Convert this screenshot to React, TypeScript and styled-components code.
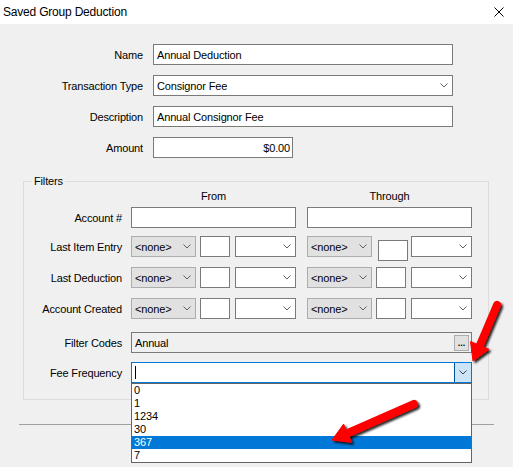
import React from "react";
import styled, { createGlobalStyle } from "styled-components";

const GlobalStyle = createGlobalStyle`
  html, body {
    margin: 0;
    padding: 0;
    background: #f0f0f0;
  }
  body {
    font-family: "Liberation Sans", Arial, sans-serif;
    font-size: 11px;
    color: #000;
  }
`;

const Window = styled.div`
  position: relative;
  width: 513px;
  height: 467px;
  overflow: hidden;
  background: #f0f0f0;
  display: flex;
  flex-direction: column;
`;

const TitleBar = styled.div`
  flex: none;
  height: 24px;
  box-sizing: border-box;
  padding: 0 9px 0 3px;
  background: #fff;
  display: flex;
  align-items: center;
  justify-content: space-between;
`;

const Title = styled.span`
  font-size: 12px;
  letter-spacing: -0.2px;
`;

const Body = styled.div`
  display: flex;
  flex-direction: column;
  padding-top: 20px;
`;

const TopForm = styled.div`
  display: grid;
  grid-template-columns: 143px 300px;
  grid-auto-rows: 21px;
  column-gap: 10px;
  row-gap: 10px;
  align-items: center;
`;

const Label = styled.span`
  text-align: right;
  letter-spacing: -0.15px;
  white-space: nowrap;
`;

const Box = styled.div<{ $w?: number }>`
  box-sizing: border-box;
  flex: none;
  height: 21px;
  width: ${({ $w }) => ($w ? `${$w}px` : "100%")};
  border: 1px solid #7a7a7a;
  background: #fff;
  display: flex;
  align-items: center;
  padding: 0 4px 0 3px;
  white-space: nowrap;
  overflow: hidden;
  letter-spacing: -0.15px;
`;

const AmountBox = styled(Box)`
  justify-content: flex-end;
  padding-right: 2px;
`;

const ComboText = styled.span`
  flex: 1;
`;

const NoneBox = styled(Box)`
  background: #e1e1e1;
  border-color: #adadad;
`;

// the "through" day box in the first date row sits a little off the grid
const DayBox = styled(Box)<{ $shifted?: boolean }>`
  margin: ${({ $shifted }) => ($shifted ? "4px 3px -4px 6px" : "0 5px 0 4px")};
`;

const ReadOnlyBox = styled(Box)`
  background: #f0f0f0;
  padding-right: 2px;
`;

const EllipsisButton = styled.div`
  box-sizing: border-box;
  width: 15px;
  height: 16px;
  background: #e1e1e1;
  border: 1px solid #adadad;
  display: flex;
  align-items: center;
  justify-content: center;
  font-weight: bold;
  font-size: 9px;
  line-height: 8px;
  letter-spacing: 0;
`;

const FocusCombo = styled(Box)`
  position: relative;
  overflow: visible;
  border-color: #0078d7;
  padding: 0;
`;

const Caret = styled.span`
  flex: none;
  width: 1px;
  height: 13px;
  background: #000;
  margin-left: 3px;
`;

const DropButton = styled.div`
  margin-left: auto;
  align-self: stretch;
  width: 16px;
  background: #cce4f7;
  border-left: 1px solid #005499;
  display: flex;
  align-items: center;
  justify-content: center;
`;

const DropList = styled.div`
  position: absolute;
  z-index: 2;
  top: calc(100% + 1px);
  left: -1px;
  right: -1px;
  background: #fff;
  border: 1px solid #646464;
`;

const DropItem = styled.div<{ $selected?: boolean }>`
  height: 13px;
  line-height: 13px;
  padding-left: 2px;
  background: ${({ $selected }) => ($selected ? "#0078d7" : "transparent")};
  color: ${({ $selected }) => ($selected ? "#fff" : "#000")};
`;

const Group = styled.fieldset`
  box-sizing: border-box;
  width: 466px;
  min-width: 0;
  margin: 17px 0 0 23px;
  padding: 2px 16px 16px 0;
  border: 1px solid #dcdcdc;
`;

const GroupTitle = styled.legend`
  margin-left: 8px;
  padding: 0 2px;
  line-height: 13px;
  letter-spacing: -0.15px;
`;

const FilterRow = styled.div<{ $top?: number }>`
  display: flex;
  align-items: center;
  margin-top: ${({ $top }) => $top ?? 0}px;
`;

const RowLabel = styled(Label)`
  width: 98px;
  margin-right: 9px;
  flex: none;
`;

const Columns = styled.div`
  display: flex;
  gap: 11px;
  flex: 1;
`;

const ColumnHead = styled.div`
  width: 165px;
  height: 13px;
  line-height: 13px;
  text-align: center;
  letter-spacing: -0.15px;
`;

const DateCell = styled.div`
  width: 165px;
  display: flex;
  align-items: flex-start;
`;

const Separator = styled.div`
  margin: 24px 0 0 19px;
  width: 475px;
  height: 1px;
  background: #a0a0a0;
`;

const Overlay = styled.svg`
  position: absolute;
  inset: 0;
  z-index: 5;
  pointer-events: none;
`;

const Chevron = ({ color = "#606060" }: { color?: string }) => (
  <svg width="8" height="5" viewBox="0 0 8 5" style={{ flex: "none" }}>
    <polyline points="0.5,0.5 4,4 7.5,0.5" fill="none" stroke={color} strokeWidth="1" />
  </svg>
);

const CloseIcon = () => (
  <svg width="10" height="10" viewBox="0 0 10 10">
    <path d="M0.5 0.5 L9.5 9.5 M9.5 0.5 L0.5 9.5" stroke="#000" strokeWidth="1" fill="none" />
  </svg>
);

const Combo = ({ w, text }: { w?: number; text?: string }) => (
  <Box $w={w}>
    <ComboText>{text}</ComboText>
    <Chevron />
  </Box>
);

const DateRange = ({ shifted }: { shifted?: boolean }) => (
  <DateCell>
    <NoneBox $w={65}>
      <ComboText>&lt;none&gt;</ComboText>
      <Chevron />
    </NoneBox>
    <DayBox $w={30} $shifted={shifted} />
    <Combo w={61} />
  </DateCell>
);

const frequencies = ["0", "1", "1234", "30", "367", "7"];

const App = () => (
  <Window>
    <GlobalStyle />
    <TitleBar>
      <Title>Saved Group Deduction</Title>
      <CloseIcon />
    </TitleBar>
    <Body>
      <TopForm>
        <Label>Name</Label>
        <Box>Annual Deduction</Box>
        <Label>Transaction Type</Label>
        <Combo text="Consignor Fee" />
        <Label>Description</Label>
        <Box>Annual Consignor Fee</Box>
        <Label>Amount</Label>
        <AmountBox $w={140}>$0.00</AmountBox>
      </TopForm>

      <Group>
        <GroupTitle>Filters</GroupTitle>
        <FilterRow>
          <RowLabel />
          <Columns>
            <ColumnHead>From</ColumnHead>
            <ColumnHead>Through</ColumnHead>
          </Columns>
        </FilterRow>
        <FilterRow $top={4}>
          <RowLabel>Account #</RowLabel>
          <Columns>
            <Box $w={165} />
            <Box $w={165} />
          </Columns>
        </FilterRow>
        <FilterRow $top={8}>
          <RowLabel>Last Item Entry</RowLabel>
          <Columns>
            <DateRange />
            <DateRange shifted />
          </Columns>
        </FilterRow>
        <FilterRow $top={10}>
          <RowLabel>Last Deduction</RowLabel>
          <Columns>
            <DateRange />
            <DateRange />
          </Columns>
        </FilterRow>
        <FilterRow $top={10}>
          <RowLabel>Account Created</RowLabel>
          <Columns>
            <DateRange />
            <DateRange />
          </Columns>
        </FilterRow>
        <FilterRow $top={13}>
          <RowLabel>Filter Codes</RowLabel>
          <ReadOnlyBox $w={341}>
            <ComboText>Annual</ComboText>
            <EllipsisButton>...</EllipsisButton>
          </ReadOnlyBox>
        </FilterRow>
        <FilterRow $top={9}>
          <RowLabel>Fee Frequency</RowLabel>
          <FocusCombo $w={341}>
            <Caret />
            <DropButton>
              <Chevron color="#404040" />
            </DropButton>
            <DropList>
              {frequencies.map((f) => (
                <DropItem key={f} $selected={f === "367"}>
                  {f}
                </DropItem>
              ))}
            </DropList>
          </FocusCombo>
        </FilterRow>
      </Group>

      <Separator />
    </Body>

    <Overlay width="513" height="467" viewBox="0 0 513 467">
      <defs>
        <filter id="arrowShadow" x="-50%" y="-50%" width="200%" height="200%">
          <feDropShadow dx="2" dy="2" stdDeviation="1.2" floodColor="#000" floodOpacity="0.85" />
        </filter>
      </defs>
      <g filter="url(#arrowShadow)" fill="#ff0000" stroke="#ff0000">
        <line x1="497" y1="305" x2="480" y2="345" strokeWidth="8" strokeLinecap="round" />
        <polygon points="489,349.3 470.5,341.5 473,361" strokeWidth="1" strokeLinejoin="round" />
        <line x1="414" y1="404" x2="348" y2="433" strokeWidth="8" strokeLinecap="round" />
        <polygon points="343.6,424.1 351.6,442.3 332,440" strokeWidth="1" strokeLinejoin="round" />
      </g>
    </Overlay>
  </Window>
);

export default App;
